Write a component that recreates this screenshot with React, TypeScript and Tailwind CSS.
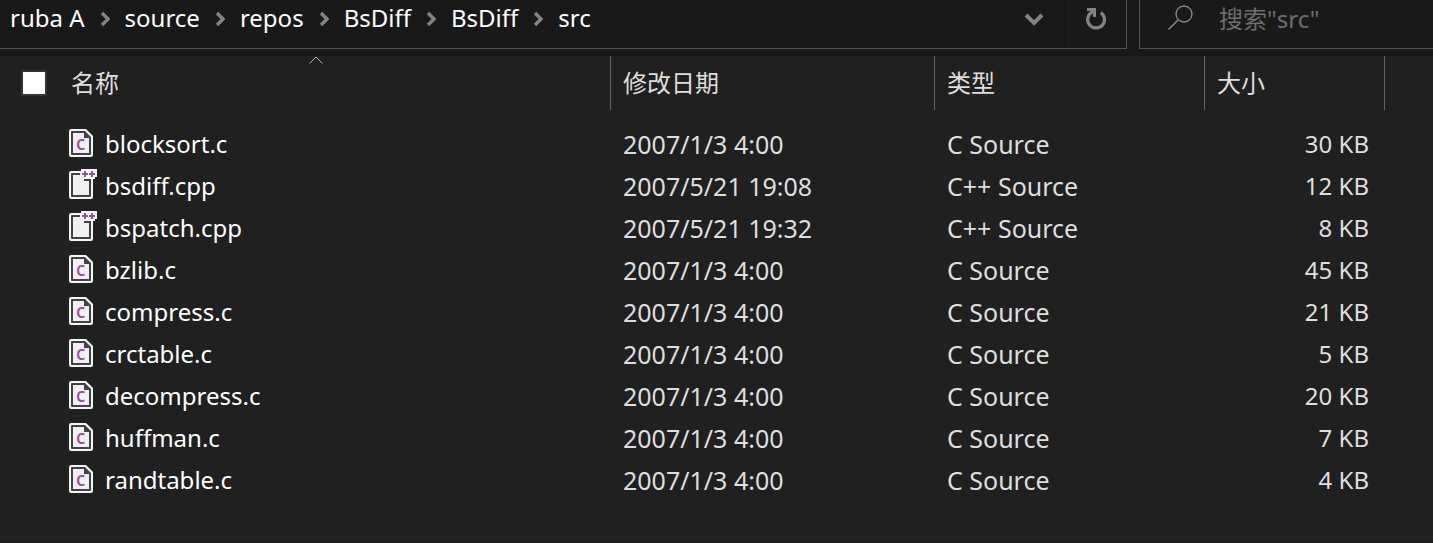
import { Fragment } from "react";

type SourceFile = {
  name: string;
  modified: string;
  kind: "C" | "C++";
  size: string;
};

const crumbs = ["ruba A", "source", "repos", "BsDiff", "BsDiff", "src"];

const files: SourceFile[] = [
  { name: "blocksort.c", modified: "2007/1/3 4:00", kind: "C", size: "30 KB" },
  { name: "bsdiff.cpp", modified: "2007/5/21 19:08", kind: "C++", size: "12 KB" },
  { name: "bspatch.cpp", modified: "2007/5/21 19:32", kind: "C++", size: "8 KB" },
  { name: "bzlib.c", modified: "2007/1/3 4:00", kind: "C", size: "45 KB" },
  { name: "compress.c", modified: "2007/1/3 4:00", kind: "C", size: "21 KB" },
  { name: "crctable.c", modified: "2007/1/3 4:00", kind: "C", size: "5 KB" },
  { name: "decompress.c", modified: "2007/1/3 4:00", kind: "C", size: "20 KB" },
  { name: "huffman.c", modified: "2007/1/3 4:00", kind: "C", size: "7 KB" },
  { name: "randtable.c", modified: "2007/1/3 4:00", kind: "C", size: "4 KB" },
];

const CIcon = () => (
  <svg width="28" height="34" viewBox="0 0 28 34" className="shrink-0" aria-hidden="true">
    <path d="M2 2h15l7 7v19q0 2-2 2H2q-2 0-2-2V4q0-2 2-2z" fill="#f6f6f6" />
    <path d="M3 4h13l6 6v17q0 1-1 1H3q-1 0-1-1V5q0-1 1-1z" fill="#424242" />
    <path d="M4 6h11v5h5v15H4z" fill="#f0eff1" />
    <text x="7" y="23" fontSize="19" fontFamily="Noto Sans, sans-serif" fontWeight="500" fill="#9b4f96">
      c
    </text>
  </svg>
);

const CppIcon = () => (
  <svg width="28" height="34" viewBox="0 0 28 34" className="shrink-0" aria-hidden="true">
    <path d="M2 2h10V0h16v8h-2v2h-2v18q0 2-2 2H2q-2 0-2-2V4q0-2 2-2z" fill="#f6f6f6" />
    <path d="M3 4h8v2H4v20h16V12h-5v-2h7v17q0 1-1 1H3q-1 0-1-1V5q0-1 1-1z" fill="#424242" />
    <path d="M4 6h8v2h3v4h5v14H4z" fill="#f0eff1" />
    <path d="M13 5h6M16 2v6M20 5h6M23 2v6" stroke="#9b4f96" strokeWidth="2" />
  </svg>
);

const Chevron = () => (
  <svg width="10" height="16" viewBox="0 0 10 16" className="mt-[2px]" aria-hidden="true">
    <path d="M2 2l6 6-6 6" fill="none" stroke="#838383" strokeWidth="3.4" />
  </svg>
);

const AddressBar = () => (
  <div className="flex flex-1 border-r border-b border-[#535353]">
    <nav aria-label="Path" className="flex-1 pl-[10px]">
      <ol className="flex h-9 items-center gap-[15px]">
        {crumbs.map((crumb, i) => (
          <Fragment key={i}>
            {i > 0 && (
              <li>
                <Chevron />
              </li>
            )}
            <li>
              <a href="#" className="text-white">
                {crumb}
              </a>
            </li>
          </Fragment>
        ))}
      </ol>
    </nav>
    <button type="button" aria-label="Recent locations" className="flex w-[60px] justify-center pt-3">
      <svg width="20" height="14" viewBox="0 0 20 14" aria-hidden="true">
        <path d="M2 3l8 8 8-8" fill="none" stroke="#838383" strokeWidth="4" />
      </svg>
    </button>
    <button
      type="button"
      aria-label="Refresh"
      className="flex w-[62px] justify-center border-l border-[#151515] pt-[7px]"
    >
      <svg width="22" height="24" viewBox="0 0 22 24" aria-hidden="true">
        <path d="M15.8 5.6A8.4 8.4 0 1 1 7 5.2" fill="none" stroke="#838383" strokeWidth="3.2" />
        <path d="M2 1h9v9H8V6.5L5.5 4H2z" fill="#838383" />
      </svg>
    </button>
  </div>
);

const SearchBox = () => (
  <div className="flex w-[294px] border-b border-l border-[#535353] pl-7">
    <svg width="26" height="26" viewBox="0 0 26 26" className="mt-[5px] shrink-0" aria-hidden="true">
      <circle cx="16" cy="9" r="8" fill="none" stroke="#8a8a8a" strokeWidth="1.3" />
      <path d="M10 15L.5 24.5" stroke="#8a8a8a" strokeWidth="1.5" />
    </svg>
    <input
      type="search"
      aria-label="搜索"
      placeholder={'搜索"src"'}
      className="ml-[25px] h-9 min-w-0 flex-1 bg-transparent outline-none placeholder:text-[#6d6d6d]"
    />
  </div>
);

const headLabel = "flex h-[54px] items-center border-r border-[#636363] pl-3 font-normal";

const FileTable = () => (
  <table className="w-full table-fixed border-collapse text-left text-[#dedede]">
    <colgroup>
      <col className="w-[611px]" />
      <col className="w-[324px]" />
      <col className="w-[270px]" />
      <col className="w-[180px]" />
      <col />
    </colgroup>
    <thead>
      <tr>
        <th className="relative p-0 pb-[13px]">
          <div className={headLabel}>
            <input
              type="checkbox"
              aria-label="Select all"
              className="ml-[9px] size-[26px] appearance-none border-2 border-[#333333] bg-white checked:bg-sky-500"
            />
            <span className="ml-6">名称</span>
          </div>
          <svg
            width="14"
            height="8"
            viewBox="0 0 14 8"
            className="absolute top-0 left-[309px]"
            aria-hidden="true"
          >
            <path d="M.5 7.5L7 1l6.5 6.5" fill="none" stroke="#b4b4b4" />
          </svg>
        </th>
        <th className="p-0 pb-[13px]">
          <div className={headLabel}>修改日期</div>
        </th>
        <th className="p-0 pb-[13px]">
          <div className={headLabel}>类型</div>
        </th>
        <th className="p-0 pb-[13px]">
          <div className={headLabel}>大小</div>
        </th>
        <td />
      </tr>
    </thead>
    <tbody>
      {files.map((file) => (
        <tr key={file.name} className="h-[42px]">
          <td className="p-0 pl-[69px]">
            <a href="#" className="flex items-center gap-2 text-white">
              {file.kind === "C" ? <CIcon /> : <CppIcon />}
              {file.name}
            </a>
          </td>
          <td className="p-0 pl-3 text-[25px] leading-8">{file.modified}</td>
          <td className="p-0 pl-3 text-[25px] leading-8">{file.kind} Source</td>
          <td className="p-0 pr-4 text-right">{file.size}</td>
          <td />
        </tr>
      ))}
    </tbody>
  </table>
);

const App = () => {
  return (
    <div className="min-h-screen border-b border-[#191919] bg-[#202020] font-['Noto_Sans','Noto_Sans_CJK_SC',sans-serif] text-[24px] leading-8">
      <header className="flex h-14 gap-3 bg-[#191919] pb-[7px]">
        <AddressBar />
        <SearchBox />
      </header>
      <main>
        <FileTable />
      </main>
    </div>
  );
};

export default App;
